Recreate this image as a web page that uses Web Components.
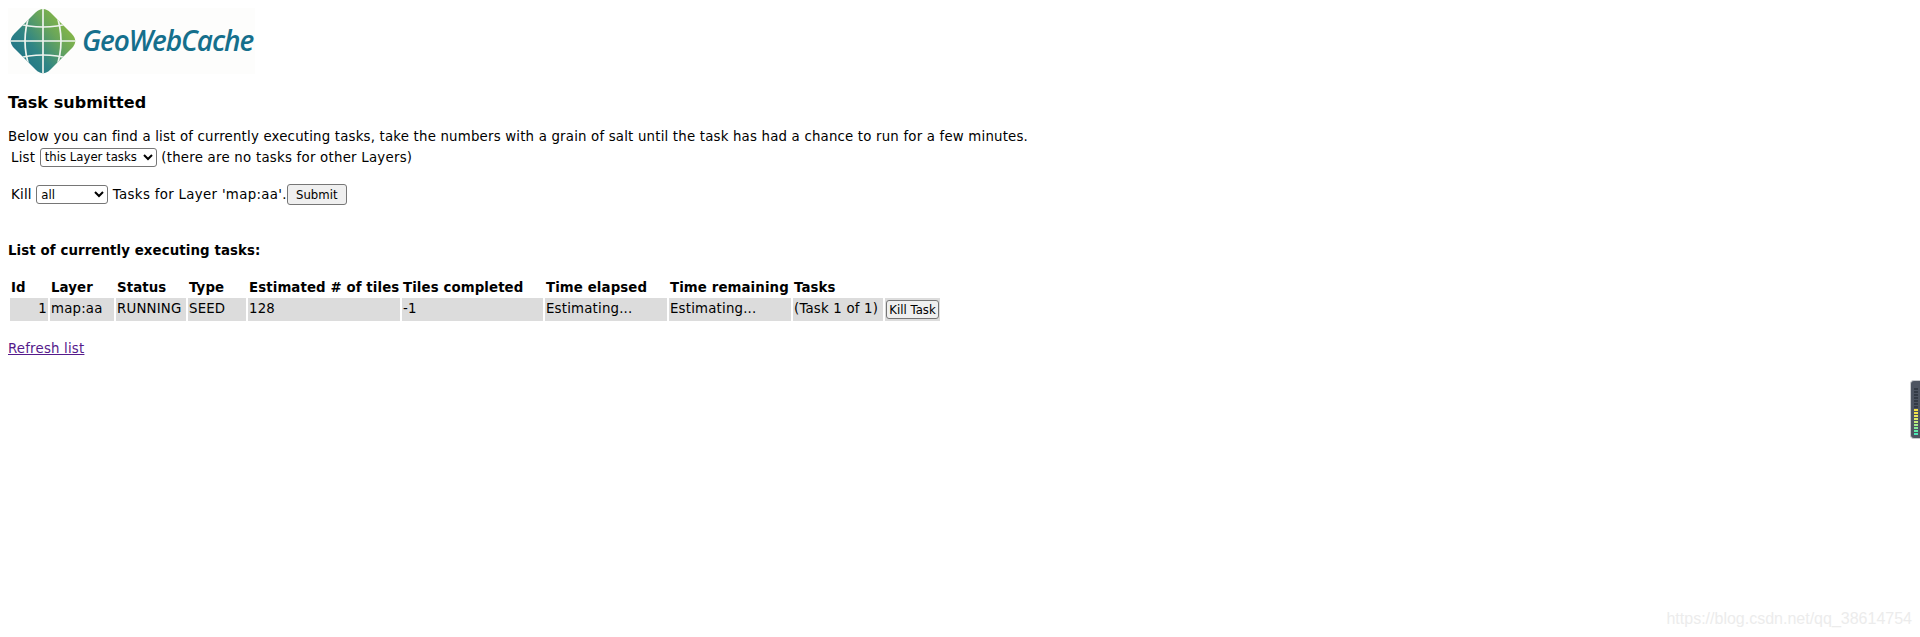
<!DOCTYPE html>
<html><head><meta charset="utf-8"><title>GeoWebCache</title>
<style>html,body{margin:0;background:#fff}body{height:637px;overflow:hidden;position:relative}</style>
</head><body>
<gwc-page></gwc-page>
<gwc-meter></gwc-meter>
<gwc-watermark>https://blog.csdn.net/qq_38614754</gwc-watermark>
<template id="logo-t">
<style>
:host{display:flex;align-items:center;width:247px;height:66px;background:#fdfdfc}
svg{display:block;flex:none;margin-left:2px}
span{font:italic 600 28px/1 "Open Sans",sans-serif;color:#156f8c;margin-left:6px;letter-spacing:-1.1px;white-space:nowrap;position:relative;top:-1px}
</style>
<svg width="66" height="66" viewBox="0 0 66 66">
<defs>
<linearGradient id="g" x1="0" y1="1" x2="1" y2=".25"><stop offset="0" stop-color="#17688a"/><stop offset=".42" stop-color="#2f8585"/><stop offset=".72" stop-color="#6aa65a"/><stop offset="1" stop-color="#8fbc3f"/></linearGradient>
<clipPath id="c"><path d="M33 1Q37 1 40.500 4.500L61.500 25.500Q69 33 61.500 40.500L40.500 61.500Q33 69 25.500 61.500L4.500 40.500Q-3 33 4.500 25.500L25.500 4.500Q29 1 33 1Z"/></clipPath>
</defs>
<path d="M33 1Q37 1 40.500 4.500L61.500 25.500Q69 33 61.500 40.500L40.500 61.500Q33 69 25.500 61.500L4.500 40.500Q-3 33 4.500 25.500L25.500 4.500Q29 1 33 1Z" fill="url(#g)"/>
<g clip-path="url(#c)" fill="none" stroke="#eef3ee" stroke-width="1.700">
<path d="M0 33H66M33 0V66"/>
<path d="M5 15Q33 23 61 15M5 51Q33 43 61 51"/>
<path d="M20 5Q10 33 20 61M46 5Q56 33 46 61"/>
</g>
</svg>
<span>GeoWebCache</span>
</template>
<template id="page-t">
<style>
:host{display:block;padding:8px;font:13.34px/normal "DejaVu Sans",Verdana,sans-serif;color:#000;letter-spacing:.19px}
h3{font-size:16px;font-weight:700;line-height:19px;margin:19px 0 17px;letter-spacing:.05px}
p{margin:0;line-height:15px}
.form{margin:0;border-spacing:2px;border-collapse:separate}
.form td{padding:1px;height:20px;white-space:nowrap;letter-spacing:.24px}
.form .gap td{height:9px}
.form .kill span{letter-spacing:.32px}
select{font:11.700px "DejaVu Sans",Verdana,sans-serif;letter-spacing:0;height:19px;padding:0;box-sizing:border-box;vertical-align:baseline;background:#fff;border:1px solid #767676;border-radius:3px;margin:0}
button{font:11.700px "DejaVu Sans",Verdana,sans-serif;letter-spacing:0;background:#efefef;border:1px solid #767676;border-radius:3px;color:#000;box-sizing:border-box;padding:0;margin:0}
.sub{width:60px;height:21px}
.sel1{width:117px}.sel2{width:72px}
h4{font-size:13.34px;font-weight:700;line-height:16px;margin:35px 0 18px;letter-spacing:.1px}
a{color:#551a8b;text-decoration:underline;display:inline-block;margin-top:18px;line-height:16px}
</style>
<gwc-logo></gwc-logo>
<h3>Task submitted</h3>
<p>Below you can find a list of currently executing tasks, take the numbers with a grain of salt until the task has had a chance to run for a few minutes.</p>
<table class="form"><tbody>
<tr><td>List <select class="sel1"><option>this Layer tasks</option></select> (there are no tasks for other Layers)</td></tr>
<tr class="gap"><td></td></tr>
<tr><td class="kill">Kill <select class="sel2"><option>all</option></select><span> Tasks for Layer 'map:aa'.</span><button class="sub">Submit</button></td></tr>
</tbody></table>
<h4>List of currently executing tasks:</h4>
<gwc-tasks></gwc-tasks>
<a href="#">Refresh list</a>
</template>
<template id="tasks-t">
<style>
:host{display:block}
table{border-collapse:separate;border-spacing:2px;table-layout:fixed;width:934px;margin:0}
th{text-align:left;font-weight:700;padding:1px;height:15px;white-space:nowrap;line-height:15px;letter-spacing:.1px}
td{background:#dcdcdc;padding:0 1px 2px;height:21px;white-space:nowrap;line-height:16px}
td.n{text-align:right}
td.b{padding:0 1px}
button{font:11.700px "DejaVu Sans",Verdana,sans-serif;letter-spacing:0;background:#efefef;border:1px solid #767676;border-radius:3px;color:#000;box-sizing:border-box;padding:0;width:53px;height:19px;margin:0;display:block}
</style>
<table>
<colgroup><col style="width:38px"><col style="width:64px"><col style="width:70px"><col style="width:58px"><col style="width:152px"><col style="width:141px"><col style="width:122px"><col style="width:122px"><col style="width:90px"><col style="width:55px"></colgroup>
<tr><th>Id</th><th>Layer</th><th>Status</th><th>Type</th><th>Estimated # of tiles</th><th>Tiles completed</th><th>Time elapsed</th><th>Time remaining</th><th>Tasks</th><th></th></tr>
<tr><td class="n">1</td><td>map:aa</td><td>RUNNING</td><td>SEED</td><td>128</td><td>-1</td><td>Estimating...</td><td>Estimating...</td><td>(Task 1 of 1)</td><td class="b"><button>Kill Task</button></td></tr>
</table>
</template>
<template id="meter-t">
<style>
:host{position:absolute;left:1910px;top:380px;width:10px;height:59px;background:#4d5461;border-radius:4px 0 0 4px;border:1px solid #c9cbcf;border-right:0;box-sizing:border-box;display:flex;flex-direction:column;gap:1px;padding:7px 0 0 3px}
i{display:block;width:4px;height:2px;background:#333a45}
</style>
<i></i><i></i><i></i><i></i><i></i><i></i><i></i>
<i style="background:#f4e03f"></i><i style="background:#f3e24a"></i><i style="background:#ece658"></i><i style="background:#dcea68"></i><i style="background:#c3ec78"></i><i style="background:#a6ec88"></i><i style="background:#86ec98"></i><i style="background:#62eaa8"></i><i style="background:#4ce8b8"></i>
</template>
<template id="wm-t">
<style>:host{position:absolute;right:8px;top:610px;font:16px/18px "Liberation Sans",Arial,sans-serif;color:#ececec;white-space:nowrap}</style><slot></slot>
</template>
<script>
function reg(name,tpl){customElements.define(name,class extends HTMLElement{constructor(){super();this.attachShadow({mode:'open'}).appendChild(document.getElementById(tpl).content.cloneNode(true));}});}
reg('gwc-logo','logo-t');reg('gwc-tasks','tasks-t');reg('gwc-meter','meter-t');reg('gwc-watermark','wm-t');reg('gwc-page','page-t');
</script>
</body></html>
